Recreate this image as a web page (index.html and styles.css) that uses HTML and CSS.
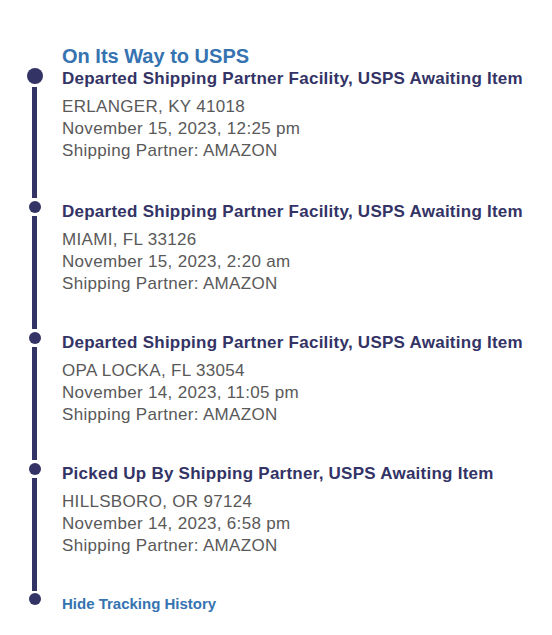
FILE: index.html
```html
<!DOCTYPE html>
<html lang="en">

<head>
    <meta charset="UTF-8">
    <meta name="viewport" content="width=device-width, initial-scale=1.0">
    <title>Tracking History</title>
    <link rel="stylesheet" href="styles.css">
</head>

<body>
    <div class="tracking">
        <h2 class="status">On Its Way to USPS</h2>

        <div class="event current">
            <div class="rail"><span class="dot"></span><span class="line"></span></div>
            <div class="info">
                <h3>Departed Shipping Partner Facility, USPS Awaiting Item</h3>
                <p>ERLANGER, KY 41018</p>
                <p>November 15, 2023, 12:25 pm</p>
                <p>Shipping Partner: AMAZON</p>
            </div>
        </div>

        <div class="event">
            <div class="rail"><span class="dot"></span><span class="line"></span></div>
            <div class="info">
                <h3>Departed Shipping Partner Facility, USPS Awaiting Item</h3>
                <p>MIAMI, FL 33126</p>
                <p>November 15, 2023, 2:20 am</p>
                <p>Shipping Partner: AMAZON</p>
            </div>
        </div>

        <div class="event">
            <div class="rail"><span class="dot"></span><span class="line"></span></div>
            <div class="info">
                <h3>Departed Shipping Partner Facility, USPS Awaiting Item</h3>
                <p>OPA LOCKA, FL 33054</p>
                <p>November 14, 2023, 11:05 pm</p>
                <p>Shipping Partner: AMAZON</p>
            </div>
        </div>

        <div class="event">
            <div class="rail"><span class="dot"></span><span class="line"></span></div>
            <div class="info">
                <h3>Picked Up By Shipping Partner, USPS Awaiting Item</h3>
                <p>HILLSBORO, OR 97124</p>
                <p>November 14, 2023, 6:58 pm</p>
                <p>Shipping Partner: AMAZON</p>
            </div>
        </div>

        <div class="event last">
            <div class="rail"><span class="dot"></span></div>
            <div class="info">
                <a href="#" class="toggle">Hide Tracking History</a>
            </div>
        </div>
    </div>
</body>

</html>
```

FILE: styles.css
```css
/* Reset */
body,
h2,
h3,
p {
    margin: 0;
    padding: 0;
    box-sizing: border-box;
}

body {
    font-family: 'Liberation Sans', Arial, sans-serif;
    color: #595959;
    background-color: #fff;
}

/* Tracking list */
.tracking {
    padding-top: 45px;
}

.status {
    margin-left: 62px;
    font-size: 20px;
    line-height: 22px;
    font-weight: 700;
    color: #3573b1;
}

.event {
    display: grid;
    grid-template-columns: 62px 1fr;
}

/* Timeline */
.rail {
    display: flex;
    flex-direction: column;
    align-items: center;
    width: 17px;
    margin-left: 26px;
    padding-top: 3px;
}

.dot {
    width: 12px;
    height: 12px;
    border-radius: 50%;
    background-color: #333366;
    margin-bottom: 3px;
}

.line {
    flex: 1;
    width: 5px;
    background-color: #333366;
}

.current .rail {
    padding-top: 1px;
}

.current .dot {
    width: 16px;
    height: 16px;
    margin-bottom: 3px;
}

/* Event text */
.info {
    padding: 3.5px 0 33.5px;
}

.current .info {
    padding: 1px 0 35.5px;
}

.info h3 {
    font-size: 17px;
    line-height: 22px;
    font-weight: 700;
    letter-spacing: 0.25px;
    color: #333366;
    margin-bottom: 6px;
}

.info p {
    font-size: 17px;
    line-height: 22px;
    letter-spacing: 0.32px;
}

.last .rail {
    padding-top: 2px;
}

.last .info {
    padding: 3px 0 0;
}

.toggle {
    font-size: 15px;
    line-height: 20px;
    font-weight: 700;
    color: #3573b1;
    text-decoration: none;
}
```
